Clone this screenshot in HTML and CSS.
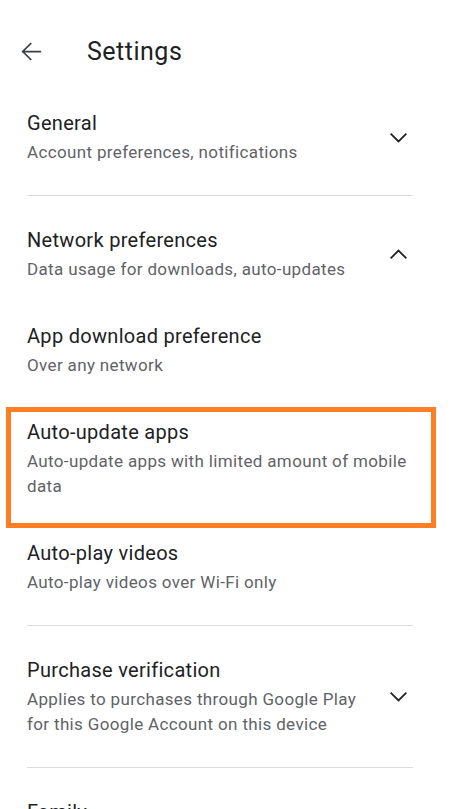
FILE: index.html
```html
<!DOCTYPE html>
<html lang="en">
<head>
<meta charset="utf-8">
<title>Settings</title>
<link rel="stylesheet" href="styles.css">
</head>
<body>
<div class="screen">
  <header class="topbar">
    <svg class="back" width="24" height="24" viewBox="0 0 24 24" aria-hidden="true">
      <path d="M2 12H22M11 3L2 12L11 21" fill="none" stroke="#3c4043" stroke-width="2" stroke-linecap="square"/>
    </svg>
    <h1 class="title">Settings</h1>
  </header>

  <section class="group">
    <div class="item">
      <div class="text">
        <div class="item-title">General</div>
        <div class="item-sub">Account preferences, notifications</div>
      </div>
      <svg class="chev" width="24" height="24" viewBox="0 0 24 24" aria-hidden="true"><path d="M3 7.5L12 16.5L21 7.5" fill="none" stroke="#202124" stroke-width="2"/></svg>
    </div>
  </section>
  <div class="divider"></div>

  <section class="group">
    <div class="item">
      <div class="text">
        <div class="item-title">Network preferences</div>
        <div class="item-sub">Data usage for downloads, auto-updates</div>
      </div>
      <svg class="chev" width="24" height="24" viewBox="0 0 24 24" aria-hidden="true"><path d="M3 16.5L12 7.5L21 16.5" fill="none" stroke="#202124" stroke-width="2"/></svg>
    </div>
    <div class="item">
      <div class="text">
        <div class="item-title">App download preference</div>
        <div class="item-sub">Over any network</div>
      </div>
    </div>
    <div class="item highlighted">
      <div class="text">
        <div class="item-title">Auto-update apps</div>
        <div class="item-sub">Auto-update apps with limited amount of mobile data</div>
      </div>
      <div class="highlight-box"></div>
    </div>
    <div class="item">
      <div class="text">
        <div class="item-title">Auto-play videos</div>
        <div class="item-sub">Auto-play videos over Wi-Fi only</div>
      </div>
    </div>
  </section>
  <div class="divider"></div>

  <section class="group">
    <div class="item">
      <div class="text">
        <div class="item-title">Purchase verification</div>
        <div class="item-sub">Applies to purchases through Google Play for this Google Account on this device</div>
      </div>
      <svg class="chev" width="24" height="24" viewBox="0 0 24 24" aria-hidden="true"><path d="M3 7.5L12 16.5L21 7.5" fill="none" stroke="#202124" stroke-width="2"/></svg>
    </div>
  </section>
  <div class="divider"></div>

  <section class="group">
    <div class="item">
      <div class="text">
        <div class="item-title">Family</div>
        <div class="item-sub">Parental controls, family library</div>
      </div>
    </div>
  </section>
</div>
</body>
</html>
```

FILE: styles.css
```css
* { box-sizing: border-box; }
html, body { margin: 0; padding: 0; background: #ffffff; }
body {
  font-family: Roboto, "Noto Sans", "Liberation Sans", sans-serif;
  color: #202124;
  overflow: hidden;
  height: 809px;
}
.screen { width: 459px; }

.topbar {
  height: 79px;
  display: flex;
  align-items: flex-start;
  padding: 37px 0 0 21px;
}
.back { margin-top: 4px; width: 21px; height: 21px; }
.title {
  margin: 0 0 0 45px;
  font-size: 25px;
  line-height: 30px;
  font-weight: 400;
  letter-spacing: 0.5px;
  color: #202124;
}

.group { padding: 10px 0; }

.item {
  position: relative;
  display: flex;
  align-items: center;
  padding: 20px 46px 20px 27px;
}
.text { flex: 1; min-width: 0; }

.item-title {
  font-size: 20px;
  line-height: 28px;
  letter-spacing: 0.3px;
  margin-bottom: 3px;
  color: #202124;
}
.item-sub {
  font-size: 17px;
  line-height: 25px;
  letter-spacing: 0.35px;
  color: #5f6368;
}

.chev {
  flex: none;
  width: 21px;
  height: 21px;
  margin-right: 4px;
  margin-left: 10px;
}

.divider {
  height: 1px;
  margin: 0 46px 0 27px;
  background: #dadce0;
}

.highlight-box {
  position: absolute;
  left: 6px;
  right: 23px;
  top: 9px;
  bottom: -9px;
  border: 5px solid #fd7e23;
  pointer-events: none;
}
```
